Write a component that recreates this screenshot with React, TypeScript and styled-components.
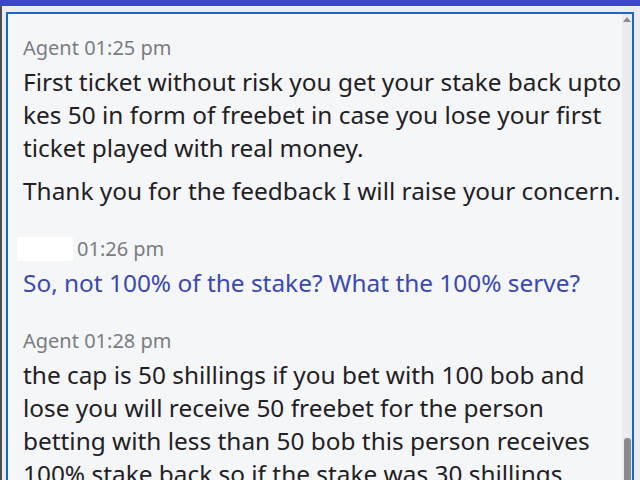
import React from "react";
import styled, { createGlobalStyle } from "styled-components";

const Global = createGlobalStyle`
  html, body { margin: 0; padding: 0; background: #e9ecf0; overflow: hidden; }
  body { font-family: "Noto Sans", "Open Sans", sans-serif; }
`;

const Page = styled.div`
  width: 640px;
  height: 480px;
  overflow: hidden;
  display: flex;
  flex-direction: column;
`;

const TopBar = styled.div`
  height: 6px;
  background: #3b47c4;
  flex: none;
`;

const Body = styled.div`
  flex: 1;
  display: flex;
  padding: 6px 6px 0 0;
  border-left: 2px solid #4a4d52;
  min-height: 0;
`;

const Gutter = styled.div`
  width: 4px;
  flex: none;
`;

const ChatBox = styled.div`
  flex: 1;
  display: flex;
  border: 2px solid #1a66c9;
  border-bottom: none;
  background: #f5f6f8;
  min-height: 0;
  overflow: hidden;
`;

const Messages = styled.div`
  flex: 1;
  padding: 20px 0 0 15px;
  min-width: 0;
`;

const Message = styled.div`
  display: flex;
  flex-direction: column;
  margin-bottom: 28px;
`;

const Meta = styled.div`
  display: flex;
  align-items: center;
  font-size: 20px;
  line-height: 28px;
  color: #7a7d82;
  margin-bottom: 3px;
`;

const Redacted = styled.span`
  display: inline-block;
  width: 56px;
  height: 24px;
  background: #ffffff;
  border-radius: 2px;
  margin: 0 4px 0 -6px;
`;

const Text = styled.p<{ $user?: boolean }>`
  margin: 0;
  font-size: 24.4px;
  line-height: 33px;
  color: ${(p) => (p.$user ? "#3a48b0" : "#1f2124")};
  & + & {
    margin-top: 10px;
  }
`;

const Scrollbar = styled.div`
  width: 10px;
  flex: none;
  background: #ececee;
  display: flex;
  flex-direction: column;
  align-items: center;
  padding-top: 3px;
`;

const Arrow = styled.div`
  width: 0;
  height: 0;
  border-left: 4px solid transparent;
  border-right: 4px solid transparent;
  border-bottom: 5px solid #8c8c8c;
`;

const Track = styled.div`
  flex: 1;
`;

const Thumb = styled.div`
  width: 7px;
  height: 42px;
  background: #8a8a8a;
  border-radius: 3px 3px 0 0;
`;

export default function App() {
  return (
    <>
      <Global />
      <Page>
        <TopBar />
        <Body>
          <Gutter />
          <ChatBox>
            <Messages>
              <Message>
                <Meta>Agent 01:25 pm</Meta>
                <Text>
                  First ticket without risk you get your stake back upto kes 50 in form of freebet in case you lose your first ticket played with real money.
                </Text>
                <Text>Thank you for the feedback I will raise your concern.</Text>
              </Message>
              <Message>
                <Meta>
                  <Redacted />
                  01:26 pm
                </Meta>
                <Text $user>So, not 100% of the stake? What the 100% serve?</Text>
              </Message>
              <Message>
                <Meta>Agent 01:28 pm</Meta>
                <Text>
                  the cap is 50 shillings if you bet with 100 bob and lose you will receive 50 freebet for the person betting with less than 50 bob this person receives 100% stake back so if the stake was 30 shillings freebet received will be 30 shillings
                </Text>
              </Message>
            </Messages>
            <Scrollbar>
              <Arrow />
              <Track />
              <Thumb />
            </Scrollbar>
          </ChatBox>
        </Body>
      </Page>
    </>
  );
}
